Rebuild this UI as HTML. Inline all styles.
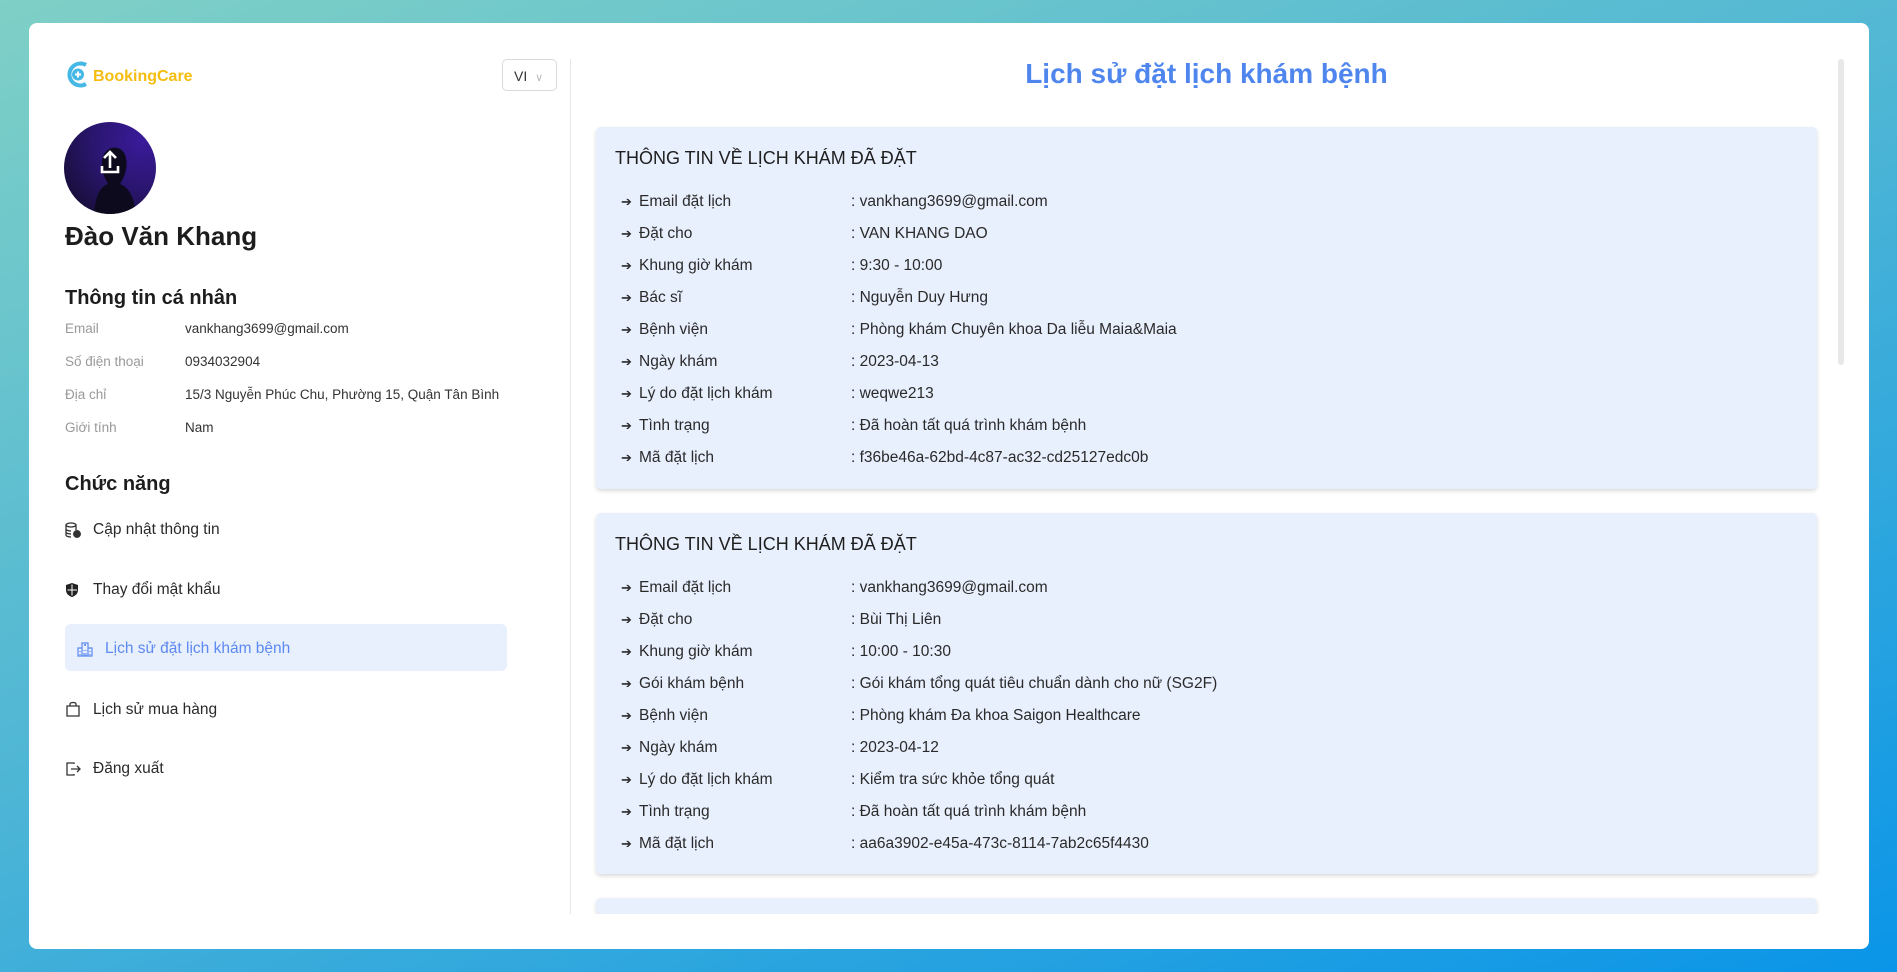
<!DOCTYPE html>
<html style="overflow:hidden"><head><meta charset="utf-8"><style>
*{box-sizing:border-box;margin:0;padding:0}
body{width:1897px;height:972px;overflow:hidden;font-family:"Liberation Sans",sans-serif;background:linear-gradient(160deg,#7fd0c6 0%,#4bb4d6 50%,#0a95e8 100%);position:relative;color:#222}
.panel{position:absolute;left:29px;top:23px;width:1840px;height:926px;background:#fff;border-radius:8px}
.abs{position:absolute}
.logo{left:65px;top:61px}
.sel{left:502px;top:59px;width:55px;height:32px;border:1px solid #d9d9d9;border-radius:5px;font-size:14px;color:#333;padding:8px 0 0 11px}
.vline{left:570px;top:59px;width:1px;height:855px;background:#e6e6e6}
.av{left:64px;top:122px;width:92px;height:92px;border-radius:50%;background:radial-gradient(circle at 85% 20%,#3a1a9a,#2a1670 45%,#1a0f40 80%);overflow:hidden}
.name{left:65px;top:221px;font-size:26px;font-weight:bold;color:#1d1d1d}
.h2{font-size:20px;font-weight:bold;color:#1d1d1d}
.lab{font-size:13.5px;color:#999}
.val{font-size:13.5px;color:#333}
.mi{font-size:15.5px;color:#2a2a2a}
.active{left:65px;top:624px;width:442px;height:47px;background:#e8effd;border-radius:6px}
.title{left:596px;width:1221px;top:58px;text-align:center;font-size:28px;font-weight:bold;color:#4f86ee}
.card{position:absolute;left:596px;width:1221px;background:#e8effd;border-radius:5px;box-shadow:0 2px 4px rgba(0,0,0,.15)}
.card h3{position:absolute;left:19px;top:21px;font-size:18px;font-weight:normal;color:#1f1f1f}
.row{position:absolute;left:25px;font-size:15.5px;color:#2a2a2a;white-space:nowrap}
.row .a{display:inline-block;width:18px;font-size:13px}
.row .v{position:absolute;left:230px}
.clip{position:absolute;left:590px;top:120px;width:1240px;height:794px;overflow:hidden}
.inner{position:absolute;left:-590px;top:-120px;width:1897px;height:914px}
.sb{left:1838px;top:59px;width:6px;height:306px;background:#e8e8e8;border-radius:3px}
</style></head><body>
<div class="panel"></div>
<div class="abs logo"><svg width="135" height="28" viewBox="0 0 135 28"><path d="M21 4 A11 11 0 1 0 21 23" fill="none" stroke="#45b8e6" stroke-width="4"/><circle cx="13" cy="13.5" r="6" fill="#45b8e6"/><path d="M10 13.5h6M13 10.5v6" stroke="#fff" stroke-width="2"/><text x="28" y="20" font-family="Liberation Sans" font-weight="bold" font-size="16" fill="#f5bd0f">BookingCare</text></svg></div>
<div class="abs sel">VI <span style="color:#bbb;font-size:11px;margin-left:4px">&#8744;</span></div>
<div class="abs vline"></div>
<div class="abs av"><svg width="92" height="92"><path d="M30 92 C32 70 38 64 44 62 C38 52 36 40 40 32 C46 22 60 24 62 36 C64 46 60 56 56 62 C66 66 70 76 72 92Z" fill="#0c0a1c"/><path d="M46 30v16M40 36l6-6 6 6M38 44v6h16v-6" stroke="#fff" stroke-width="2.6" fill="none"/></svg></div>
<div class="abs name">Đào Văn Khang</div>
<div class="abs h2" style="left:65px;top:287px">Thông tin cá nhân</div>
<div class="abs lab" style="left:65px;top:321px">Email</div><div class="abs val" style="left:185px;top:321px">vankhang3699@gmail.com</div>
<div class="abs lab" style="left:65px;top:354px">Số điện thoại</div><div class="abs val" style="left:185px;top:354px">0934032904</div>
<div class="abs lab" style="left:65px;top:387px">Địa chỉ</div><div class="abs val" style="left:185px;top:387px">15/3 Nguyễn Phúc Chu, Phường 15, Quận Tân Bình</div>
<div class="abs lab" style="left:65px;top:420px">Giới tính</div><div class="abs val" style="left:185px;top:420px">Nam</div>
<div class="abs h2" style="left:65px;top:473px">Chức năng</div>
<div class="abs" style="left:65px;top:522px"><svg width="16" height="16" fill="none" stroke="#333" stroke-width="1.3"><ellipse cx="6" cy="3" rx="5" ry="2"/><path d="M1 3v10c0 1 2 2 5 2M11 3v5M1 7c0 1 2 2 5 2M1 10c0 1 2 2 5 2"/><circle cx="12" cy="12" r="3.3" fill="#333"/></svg></div>
<div class="abs mi" style="left:93px;top:521px">Cập nhật thông tin</div>
<div class="abs" style="left:65px;top:582px"><svg width="16" height="16"><path d="M7 1L1 3v5c0 4 3 6 6 7 3-1 6-3 6-7V3z" fill="#222"/><path d="M7 2.5v11M2.5 8H12" stroke="#fff" stroke-width="1"/></svg></div>
<div class="abs mi" style="left:93px;top:581px">Thay đổi mật khẩu</div>
<div class="abs active"></div>
<div class="abs" style="left:77px;top:641px"><svg width="16" height="16" fill="none" stroke="#5d8af0" stroke-width="1.2"><path d="M1 15V7h4V2h6v5h4v8zM5 15V7M11 15V7M7 4h2M8 3v2M3 10v1M3 13v1M13 10v1M13 13v1M7 9v1M9 9v1M7 12v3h2v-3"/></svg></div>
<div class="abs mi" style="left:105px;top:640px;color:#5d8af0">Lịch sử đặt lịch khám bệnh</div>
<div class="abs" style="left:65px;top:701px"><svg width="16" height="16" fill="none" stroke="#333" stroke-width="1.3"><path d="M2 5h12v10H2zM5 5V3c0-2 6-2 6 0v2"/></svg></div>
<div class="abs mi" style="left:93px;top:701px">Lịch sử mua hàng</div>
<div class="abs" style="left:65px;top:761px"><svg width="16" height="16" fill="none" stroke="#333" stroke-width="1.3"><path d="M9 3V2H2v12h7v-1M6 8h9M12 5l3 3-3 3"/></svg></div>
<div class="abs mi" style="left:93px;top:760px">Đăng xuất</div>
<div class="abs title">Lịch sử đặt lịch khám bệnh</div>
<div class="abs sb"></div>
<div class="clip"><div class="inner">
<div class="card" style="top:127px;height:362px"><h3>THÔNG TIN VỀ LỊCH KHÁM ĐÃ ĐẶT</h3>
<div class="row" style="top:66px"><span class="a">➔</span>Email đặt lịch<span class="v">: vankhang3699@gmail.com</span></div>
<div class="row" style="top:98px"><span class="a">➔</span>Đặt cho<span class="v">: VAN KHANG DAO</span></div>
<div class="row" style="top:130px"><span class="a">➔</span>Khung giờ khám<span class="v">: 9:30 - 10:00</span></div>
<div class="row" style="top:162px"><span class="a">➔</span>Bác sĩ<span class="v">: Nguyễn Duy Hưng</span></div>
<div class="row" style="top:194px"><span class="a">➔</span>Bệnh viện<span class="v">: Phòng khám Chuyên khoa Da liễu Maia&amp;Maia</span></div>
<div class="row" style="top:226px"><span class="a">➔</span>Ngày khám<span class="v">: 2023-04-13</span></div>
<div class="row" style="top:258px"><span class="a">➔</span>Lý do đặt lịch khám<span class="v">: weqwe213</span></div>
<div class="row" style="top:290px"><span class="a">➔</span>Tình trạng<span class="v">: Đã hoàn tất quá trình khám bệnh</span></div>
<div class="row" style="top:322px"><span class="a">➔</span>Mã đặt lịch<span class="v">: f36be46a-62bd-4c87-ac32-cd25127edc0b</span></div>
</div>
<div class="card" style="top:513px;height:361px"><h3>THÔNG TIN VỀ LỊCH KHÁM ĐÃ ĐẶT</h3>
<div class="row" style="top:66px"><span class="a">➔</span>Email đặt lịch<span class="v">: vankhang3699@gmail.com</span></div>
<div class="row" style="top:98px"><span class="a">➔</span>Đặt cho<span class="v">: Bùi Thị Liên</span></div>
<div class="row" style="top:130px"><span class="a">➔</span>Khung giờ khám<span class="v">: 10:00 - 10:30</span></div>
<div class="row" style="top:162px"><span class="a">➔</span>Gói khám bệnh<span class="v">: Gói khám tổng quát tiêu chuẩn dành cho nữ (SG2F)</span></div>
<div class="row" style="top:194px"><span class="a">➔</span>Bệnh viện<span class="v">: Phòng khám Đa khoa Saigon Healthcare</span></div>
<div class="row" style="top:226px"><span class="a">➔</span>Ngày khám<span class="v">: 2023-04-12</span></div>
<div class="row" style="top:258px"><span class="a">➔</span>Lý do đặt lịch khám<span class="v">: Kiểm tra sức khỏe tổng quát</span></div>
<div class="row" style="top:290px"><span class="a">➔</span>Tình trạng<span class="v">: Đã hoàn tất quá trình khám bệnh</span></div>
<div class="row" style="top:322px"><span class="a">➔</span>Mã đặt lịch<span class="v">: aa6a3902-e45a-473c-8114-7ab2c65f4430</span></div>
</div>
<div class="card" style="top:898px;height:16px"></div>
</div></div>
</body></html>
